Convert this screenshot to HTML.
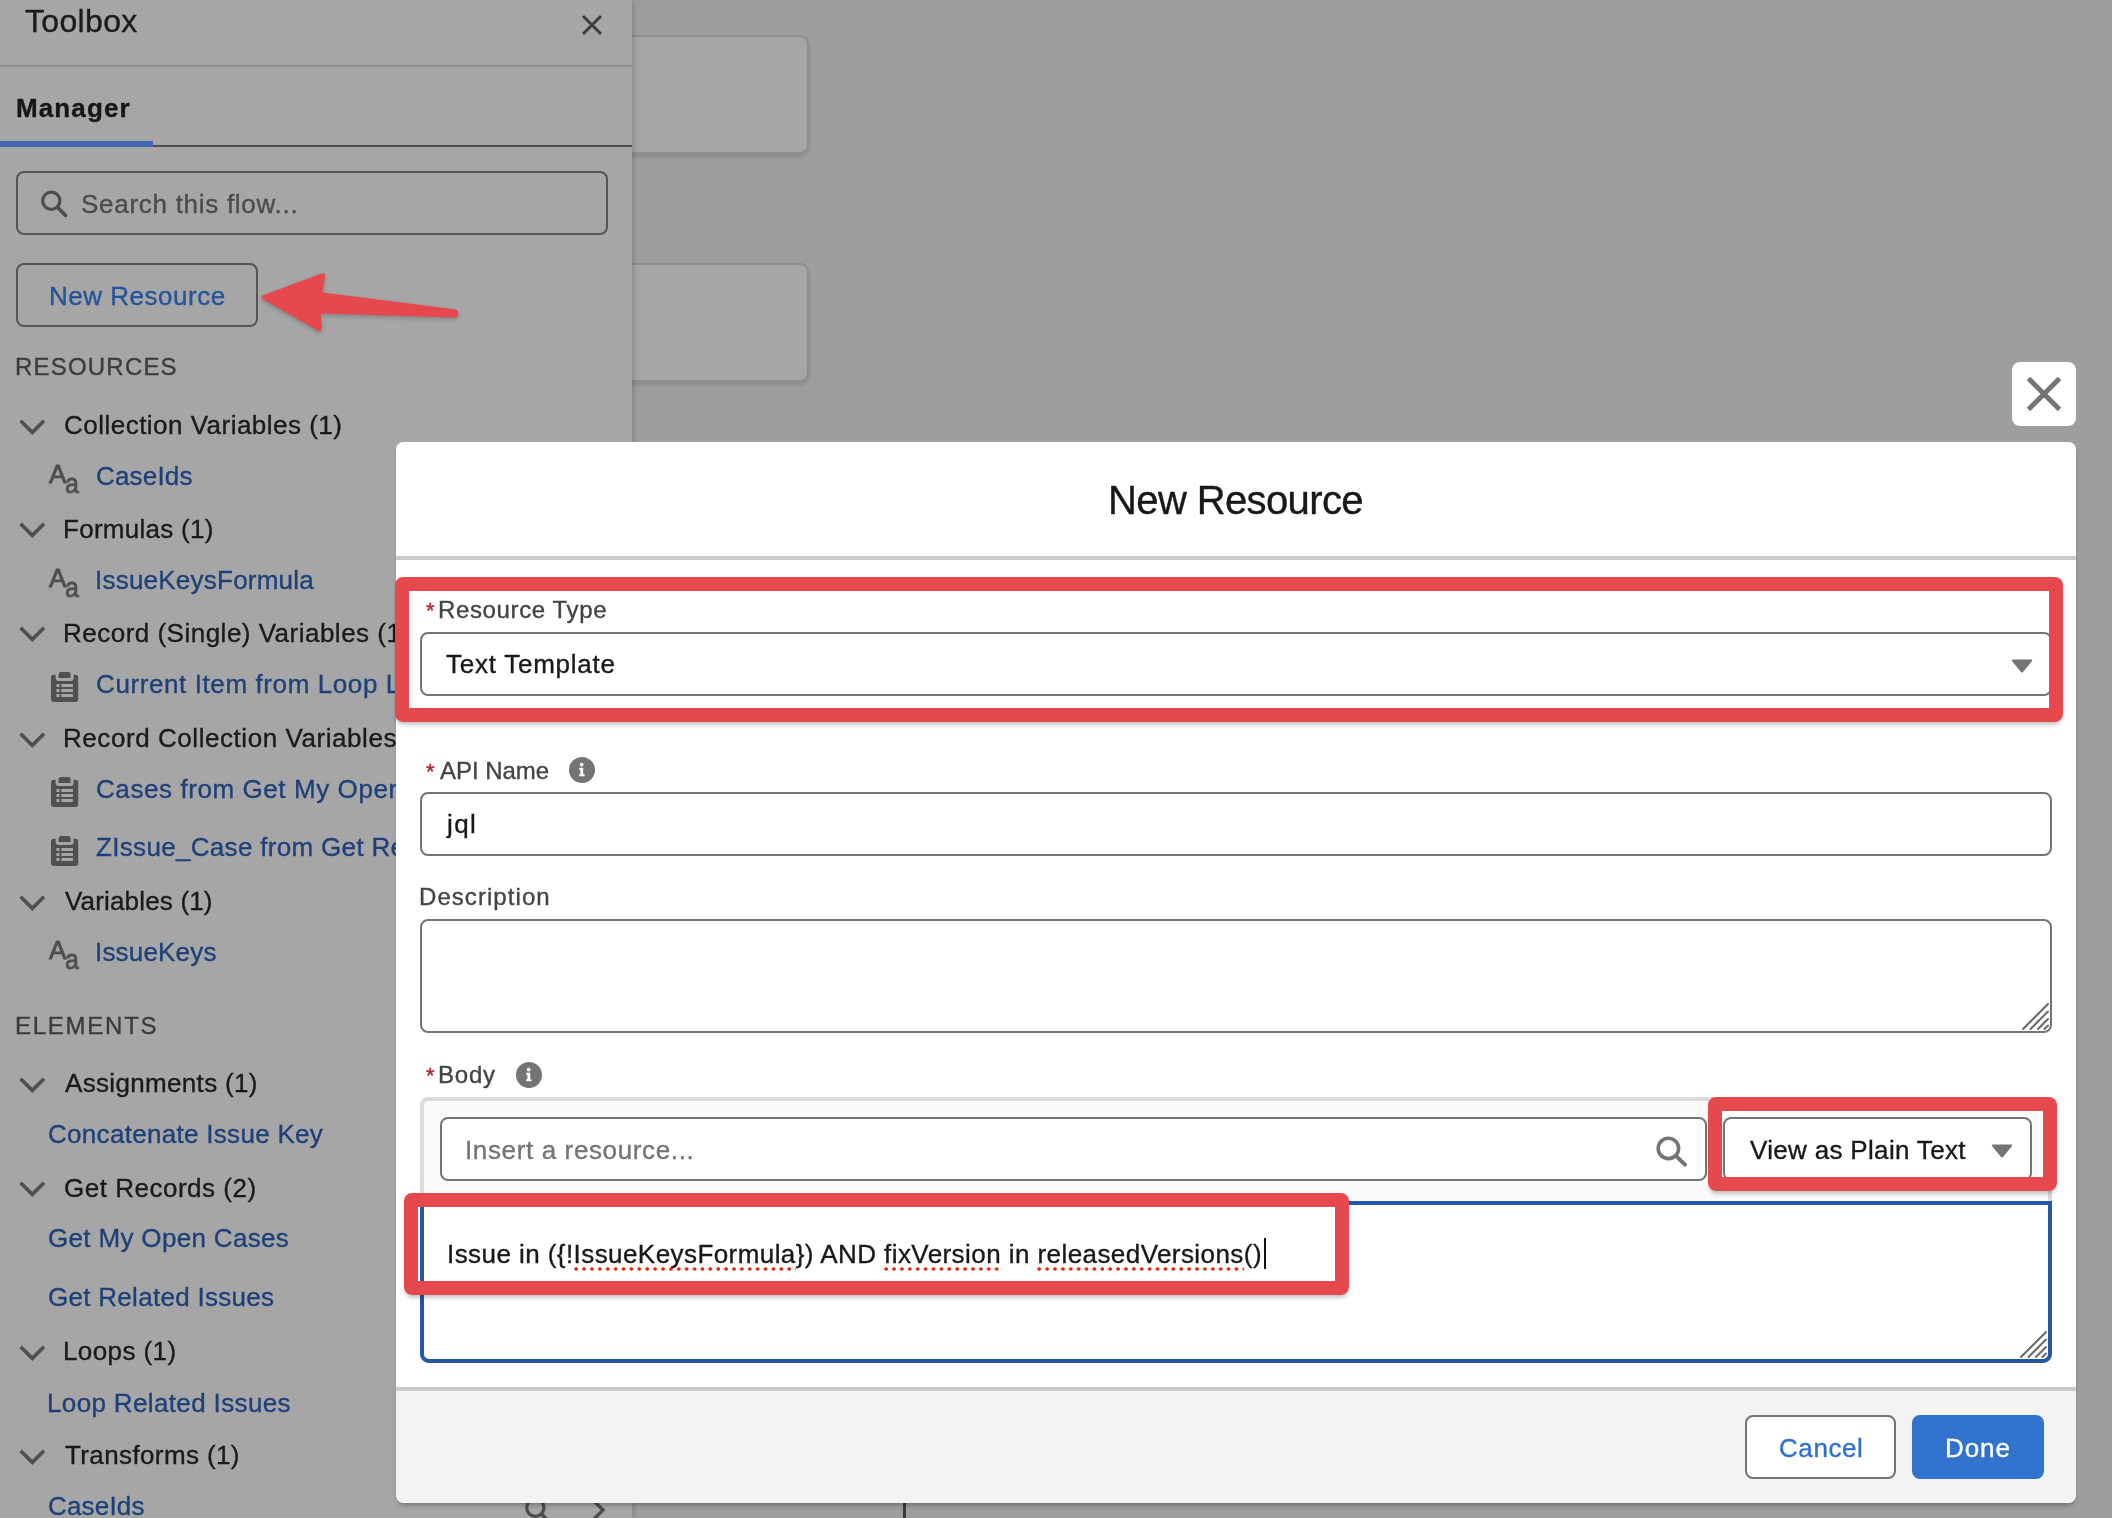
<!DOCTYPE html>
<html lang="en">
<head>
<meta charset="utf-8">
<title>New Resource</title>
<style>
*{box-sizing:border-box;margin:0;padding:0}
html,body{width:2112px;height:1518px;overflow:hidden;background:#9e9e9e}
body{position:relative;font-family:"Liberation Sans",sans-serif;color:#181818}
.abs{position:absolute}
.t{position:absolute;white-space:pre;line-height:1;font-size:26px;-webkit-text-stroke:0.35px currentColor;will-change:transform}
svg{position:absolute;overflow:visible}
/* canvas */
#canvas{left:0;top:0;width:2112px;height:1518px;background:#9e9e9e}
.card{position:absolute;left:600px;width:208.5px;height:119px;background:#a6a6a6;border:2px solid #8e8e8e;border-radius:9px;box-shadow:0 3px 4px rgba(0,0,0,.13)}
/* sidebar */
#side{left:0;top:0;width:632px;height:1518px;background:#a6a6a6;box-shadow:2px 0 6px rgba(0,0,0,.17)}
#sideclip{left:0;top:0;width:632px;height:1518px;overflow:hidden}
.sbox{position:absolute;border:2px solid #555;border-radius:8px}
/* modal */
#modal{left:396px;top:442px;width:1680px;height:1061px;background:#fff;border-radius:8px;box-shadow:0 4px 5px -2px rgba(0,0,0,.30)}
#mhead{left:396px;top:442px;width:1680px;height:118px;border-bottom:4px solid #c9c9c9;background:#fff;border-radius:8px 8px 0 0}
#mfoot{left:396px;top:1387px;width:1680px;height:116px;border-top:4px solid #c9c9c9;background:#f3f3f3;border-radius:0 0 8px 8px}
.inp{position:absolute;background:#fff;border:2px solid #747474;border-radius:8px}
.req{color:#b3222a;font-size:22px}
.red{position:absolute;border:14px solid #e5484d;border-radius:8px;box-shadow:0 4px 5px -2px rgba(0,0,0,.30)}
.sq{background:radial-gradient(circle at 2.2px 2.2px,#e12a16 1.55px,rgba(225,42,22,0) 2.2px) 0 100%/7.9px 4.4px repeat-x;padding-bottom:2.6px}
</style>
</head>
<body>
<div id="canvas" class="abs">
  <div class="card" style="top:35px"></div>
  <div class="card" style="top:263px"></div>
  <div class="abs" style="left:903px;top:1502px;width:3px;height:16px;background:#3a3a3a"></div>
</div>

<div id="side" class="abs"></div>
<div id="sideclip" class="abs">
  <!-- header -->
  <svg style="left:582px;top:15px" width="20" height="20" viewBox="0 0 20 20"><path d="M1 1 L19 19 M19 1 L1 19" stroke="#3d3d3d" stroke-width="3" fill="none"/></svg>
  <div class="abs" style="left:0;top:65px;width:632px;height:2px;background:#8e8e8e"></div>
  <div class="abs" style="left:0;top:145px;width:632px;height:2px;background:#4e4e4e"></div>
  <div class="abs" style="left:0;top:141px;width:153px;height:6px;background:#4467b1"></div>
  <!-- search -->
  <div class="sbox" style="left:16px;top:171px;width:592px;height:64px"></div>
  <svg style="left:40px;top:189px" width="28" height="28" viewBox="0 0 28 28"><circle cx="11.3" cy="11.8" r="8.6" stroke="#4d4d4d" stroke-width="3.2" fill="none"/><path d="M17.6 18.2 L25.6 26.4" stroke="#4d4d4d" stroke-width="3.6" stroke-linecap="round"/></svg>
  <!-- new resource -->
  <div class="sbox" style="left:16px;top:263px;width:242px;height:64px"></div>
<svg style="left:19px;top:418.6px" width="27" height="16" viewBox="0 0 27 16"><path d="M1.6 1.8 L13.3 13.4 L25 1.8" stroke="#4f4f4f" stroke-width="3.6" fill="none"/></svg>
<svg style="left:19px;top:522.4px" width="27" height="16" viewBox="0 0 27 16"><path d="M1.6 1.8 L13.3 13.4 L25 1.8" stroke="#4f4f4f" stroke-width="3.6" fill="none"/></svg>
<svg style="left:19px;top:626.4px" width="27" height="16" viewBox="0 0 27 16"><path d="M1.6 1.8 L13.3 13.4 L25 1.8" stroke="#4f4f4f" stroke-width="3.6" fill="none"/></svg>
<svg style="left:19px;top:731.8px" width="27" height="16" viewBox="0 0 27 16"><path d="M1.6 1.8 L13.3 13.4 L25 1.8" stroke="#4f4f4f" stroke-width="3.6" fill="none"/></svg>
<svg style="left:19px;top:894.7px" width="27" height="16" viewBox="0 0 27 16"><path d="M1.6 1.8 L13.3 13.4 L25 1.8" stroke="#4f4f4f" stroke-width="3.6" fill="none"/></svg>
<svg style="left:19px;top:1076.7px" width="27" height="16" viewBox="0 0 27 16"><path d="M1.6 1.8 L13.3 13.4 L25 1.8" stroke="#4f4f4f" stroke-width="3.6" fill="none"/></svg>
<svg style="left:19px;top:1181.4px" width="27" height="16" viewBox="0 0 27 16"><path d="M1.6 1.8 L13.3 13.4 L25 1.8" stroke="#4f4f4f" stroke-width="3.6" fill="none"/></svg>
<svg style="left:19px;top:1345.0px" width="27" height="16" viewBox="0 0 27 16"><path d="M1.6 1.8 L13.3 13.4 L25 1.8" stroke="#4f4f4f" stroke-width="3.6" fill="none"/></svg>
<svg style="left:19px;top:1448.6px" width="27" height="16" viewBox="0 0 27 16"><path d="M1.6 1.8 L13.3 13.4 L25 1.8" stroke="#4f4f4f" stroke-width="3.6" fill="none"/></svg>
<div class="t" style="left:48.6px;top:460.7px;font-size:26px;color:#4f4f4f;-webkit-text-stroke:0.9px #4f4f4f">A</div><div class="t" style="left:65.2px;top:470.5px;font-size:27px;color:#4f4f4f;-webkit-text-stroke:0.8px #4f4f4f;transform:scaleX(.92);transform-origin:0 0">a</div>
<div class="t" style="left:48.6px;top:564.9px;font-size:26px;color:#4f4f4f;-webkit-text-stroke:0.9px #4f4f4f">A</div><div class="t" style="left:65.2px;top:574.7px;font-size:27px;color:#4f4f4f;-webkit-text-stroke:0.8px #4f4f4f;transform:scaleX(.92);transform-origin:0 0">a</div>
<div class="t" style="left:48.6px;top:936.8px;font-size:26px;color:#4f4f4f;-webkit-text-stroke:0.9px #4f4f4f">A</div><div class="t" style="left:65.2px;top:946.6px;font-size:27px;color:#4f4f4f;-webkit-text-stroke:0.8px #4f4f4f;transform:scaleX(.92);transform-origin:0 0">a</div>
<svg style="left:50.8px;top:672.0px" width="28" height="30" viewBox="0 0 28 30"><path fill="#4f4f4f" fill-rule="evenodd" d="M3 2.8 H4.6 V6 Q4.6 9 7.6 9 H19.6 Q22.6 9 22.6 6 V2.8 H24.2 Q27.2 2.8 27.2 5.8 V27 Q27.2 30 24.2 30 H3 Q0 30 0 27 V5.8 Q0 2.8 3 2.8 Z M5.4 11.9 V15.1 H8.5 V11.9 Z M10.3 11.9 V15.1 H21.9 V11.9 Z M5.4 16.9 V20.1 H8.5 V16.9 Z M10.3 16.9 V20.1 H21.9 V16.9 Z M5.4 21.9 V25.1 H8.5 V21.9 Z M10.3 21.9 V25.1 H21.9 V21.9 Z"/><path fill="#4f4f4f" d="M7.6 6 V2.4 Q7.6 0 10 0 H17.2 Q19.6 0 19.6 2.4 V6 Z"/></svg>
<svg style="left:50.8px;top:777.4px" width="28" height="30" viewBox="0 0 28 30"><path fill="#4f4f4f" fill-rule="evenodd" d="M3 2.8 H4.6 V6 Q4.6 9 7.6 9 H19.6 Q22.6 9 22.6 6 V2.8 H24.2 Q27.2 2.8 27.2 5.8 V27 Q27.2 30 24.2 30 H3 Q0 30 0 27 V5.8 Q0 2.8 3 2.8 Z M5.4 11.9 V15.1 H8.5 V11.9 Z M10.3 11.9 V15.1 H21.9 V11.9 Z M5.4 16.9 V20.1 H8.5 V16.9 Z M10.3 16.9 V20.1 H21.9 V16.9 Z M5.4 21.9 V25.1 H8.5 V21.9 Z M10.3 21.9 V25.1 H21.9 V21.9 Z"/><path fill="#4f4f4f" d="M7.6 6 V2.4 Q7.6 0 10 0 H17.2 Q19.6 0 19.6 2.4 V6 Z"/></svg>
<svg style="left:50.8px;top:835.8px" width="28" height="30" viewBox="0 0 28 30"><path fill="#4f4f4f" fill-rule="evenodd" d="M3 2.8 H4.6 V6 Q4.6 9 7.6 9 H19.6 Q22.6 9 22.6 6 V2.8 H24.2 Q27.2 2.8 27.2 5.8 V27 Q27.2 30 24.2 30 H3 Q0 30 0 27 V5.8 Q0 2.8 3 2.8 Z M5.4 11.9 V15.1 H8.5 V11.9 Z M10.3 11.9 V15.1 H21.9 V11.9 Z M5.4 16.9 V20.1 H8.5 V16.9 Z M10.3 16.9 V20.1 H21.9 V16.9 Z M5.4 21.9 V25.1 H8.5 V21.9 Z M10.3 21.9 V25.1 H21.9 V21.9 Z"/><path fill="#4f4f4f" d="M7.6 6 V2.4 Q7.6 0 10 0 H17.2 Q19.6 0 19.6 2.4 V6 Z"/></svg>

<div id="tb" class="t" style="left:25px;top:5px;font-size:32px;color:#1a1a1a;letter-spacing:0.33px">Toolbox</div>
<div id="mgr" class="t" style="left:16px;top:95px;font-size:26px;color:#161616;letter-spacing:1.12px;font-weight:700">Manager</div>
<div id="srch" class="t" style="left:81px;top:191px;font-size:26px;color:#4b4b4b;letter-spacing:0.72px">Search this flow...</div>
<div id="nrb" class="t" style="left:49px;top:283px;font-size:26px;color:#24549a;letter-spacing:0.52px">New Resource</div>
<div id="res" class="t" style="left:15px;top:355px;font-size:24px;color:#3b3b3b;letter-spacing:1.20px">RESOURCES</div>
<div id="g1" class="t" style="left:64px;top:412px;font-size:26px;color:#1a1a1a;letter-spacing:0.48px">Collection Variables (1)</div>
<div id="l1" class="t" style="left:96px;top:463px;font-size:26px;color:#1e4079;letter-spacing:0.17px">CaseIds</div>
<div id="g2" class="t" style="left:63px;top:516px;font-size:26px;color:#1a1a1a;letter-spacing:0.27px">Formulas (1)</div>
<div id="l2" class="t" style="left:95px;top:567px;font-size:26px;color:#1e4079;letter-spacing:0.23px">IssueKeysFormula</div>
<div id="g3" class="t" style="left:63px;top:620px;font-size:26px;color:#1a1a1a;letter-spacing:0.49px">Record (Single) Variables (1)</div>
<div id="l3" class="t" style="left:96px;top:671px;font-size:26px;color:#1e4079;letter-spacing:0.60px">Current Item from Loop Loop Related Issues</div>
<div id="g4" class="t" style="left:63px;top:725px;font-size:26px;color:#1a1a1a;letter-spacing:0.56px">Record Collection Variables (2)</div>
<div id="l4" class="t" style="left:96px;top:776px;font-size:26px;color:#1e4079;letter-spacing:0.58px">Cases from Get My Open Cases</div>
<div id="l5" class="t" style="left:96px;top:834px;font-size:26px;color:#1e4079;letter-spacing:0.32px">ZIssue_Case from Get Related Issues</div>
<div id="g5" class="t" style="left:65px;top:888px;font-size:26px;color:#1a1a1a;letter-spacing:0.17px">Variables (1)</div>
<div id="l6" class="t" style="left:95px;top:939px;font-size:26px;color:#1e4079;letter-spacing:0.18px">IssueKeys</div>
<div id="ele" class="t" style="left:15px;top:1014px;font-size:24px;color:#3b3b3b;letter-spacing:1.74px">ELEMENTS</div>
<div id="g6" class="t" style="left:65px;top:1070px;font-size:26px;color:#1a1a1a;letter-spacing:0.33px">Assignments (1)</div>
<div id="l7" class="t" style="left:48px;top:1121px;font-size:26px;color:#1e4079;letter-spacing:0.30px">Concatenate Issue Key</div>
<div id="g7" class="t" style="left:64px;top:1175px;font-size:26px;color:#1a1a1a;letter-spacing:0.51px">Get Records (2)</div>
<div id="l8" class="t" style="left:48px;top:1225px;font-size:26px;color:#1e4079;letter-spacing:0.33px">Get My Open Cases</div>
<div id="l9" class="t" style="left:48px;top:1284px;font-size:26px;color:#1e4079;letter-spacing:0.29px">Get Related Issues</div>
<div id="g8" class="t" style="left:63px;top:1338px;font-size:26px;color:#1a1a1a;letter-spacing:0.40px">Loops (1)</div>
<div id="l10" class="t" style="left:47px;top:1390px;font-size:26px;color:#1e4079;letter-spacing:0.36px">Loop Related Issues</div>
<div id="g9" class="t" style="left:65px;top:1442px;font-size:26px;color:#1a1a1a;letter-spacing:0.38px">Transforms (1)</div>
<div id="l11" class="t" style="left:48px;top:1493px;font-size:26px;color:#1e4079;letter-spacing:0.17px">CaseIds</div>

  <!-- bottom partial icons -->
  <svg style="left:524px;top:1496px" width="28" height="28" viewBox="0 0 28 28"><circle cx="11.3" cy="11.8" r="8.6" stroke="#4d4d4d" stroke-width="3.2" fill="none"/><path d="M17.6 18.2 L25.6 26.4" stroke="#4d4d4d" stroke-width="3.6" stroke-linecap="round"/></svg>
  <svg style="left:590px;top:1498px" width="16" height="26" viewBox="0 0 16 26"><path d="M3 2 L13 12 L3 22" stroke="#4d4d4d" stroke-width="3.4" fill="none"/></svg>
</div>

<!-- red arrow -->
<svg style="left:0;top:0;filter:drop-shadow(0 2px 2px rgba(0,0,0,.22))" width="640" height="400" viewBox="0 0 640 400">
  <path d="M262.5 295.5 L321.5 273.6 Q325.6 272.4 325 276.6 L322.4 292.6 L454.4 309.3 Q458.6 310.2 458.4 313.8 Q458 317.8 453.6 317.6 L320.6 313.4 L321.8 328.4 Q322 332.6 318 330.8 L262.8 299.2 Q260.4 297.2 262.5 295.5 Z" fill="#e5484d"/>
</svg>

<div id="closebtn" class="abs" style="left:2012px;top:362px;width:64px;height:64px;background:#fff;border-radius:8px">
  <svg style="left:0;top:0" width="64" height="64" viewBox="0 0 64 64"><path d="M16.5 16.5 L47.5 47.5 M47.5 16.5 L16.5 47.5" stroke="#747474" stroke-width="5" fill="none"/></svg>
</div>

<div id="modal" class="abs"></div>
<div id="mhead" class="abs"></div>
<div id="mfoot" class="abs"></div>

<!-- form -->
<div class="t req" style="left:425.8px;top:600.4px">*</div>
<div class="inp" style="left:420px;top:632px;width:1632px;height:64px"></div>
<svg style="left:2011px;top:659px" width="22" height="14" viewBox="0 0 22 14"><path d="M1.5 0.5 L20.5 0.5 Q21.8 0.7 21 1.9 L12 13 Q11 14 10 13 L1 1.9 Q0.2 0.7 1.5 0.5 Z" fill="#747474"/></svg>

<div class="t req" style="left:425.8px;top:760.5px">*</div>
<svg style="left:569px;top:757px" width="26" height="26" viewBox="0 0 26 26"><circle cx="13" cy="13" r="13" fill="#747474"/><circle cx="12.7" cy="7.6" r="1.9" fill="#fff"/><path d="M10.2 10.8 H14.2 V17.2 H15.6 V19.2 H10.2 V17.2 H11.4 V12.8 H10.2 Z" fill="#fff"/></svg>
<div class="inp" style="left:420px;top:792px;width:1632px;height:64px"></div>

<div class="inp" style="left:420px;top:919px;width:1632px;height:114px"></div>
<svg style="left:2021px;top:1003px" width="28" height="28" viewBox="0 0 28 28"><path d="M2 26 L27 1 M9.5 26 L27 8.5 M17 26 L27 16 M23.5 26 L27 22.5" stroke="#6a6a6a" stroke-width="2.1" stroke-linecap="round" fill="none"/></svg>

<div class="t req" style="left:425.8px;top:1065.2px">*</div>
<svg style="left:516px;top:1062px" width="26" height="26" viewBox="0 0 26 26"><circle cx="13" cy="13" r="13" fill="#747474"/><circle cx="12.7" cy="7.6" r="1.9" fill="#fff"/><path d="M10.2 10.8 H14.2 V17.2 H15.6 V19.2 H10.2 V17.2 H11.4 V12.8 H10.2 Z" fill="#fff"/></svg>

<!-- rich text container -->
<div class="abs" style="left:420px;top:1097px;width:1632px;height:266px;background:#fafaf9;border:4px solid #dddbda;border-radius:8px"></div>
<div class="inp" style="left:440px;top:1117px;width:1267px;height:64px"></div>
<svg style="left:1655px;top:1135px" width="32" height="32" viewBox="0 0 32 32"><circle cx="13.4" cy="13.4" r="10.2" stroke="#747474" stroke-width="3.6" fill="none"/><path d="M20.8 20.8 L30 29.6" stroke="#747474" stroke-width="4" stroke-linecap="round"/></svg>
<div class="inp" style="left:1723px;top:1117px;width:309px;height:64px"></div>
<svg style="left:1991px;top:1144px" width="22" height="14" viewBox="0 0 22 14"><path d="M1.5 0.5 L20.5 0.5 Q21.8 0.7 21 1.9 L12 13 Q11 14 10 13 L1 1.9 Q0.2 0.7 1.5 0.5 Z" fill="#747474"/></svg>
<!-- body textarea -->
<div class="abs" style="left:420px;top:1201px;width:1632px;height:162px;background:#fff;border:4px solid #2557a7;border-radius:0 0 9px 9px"></div>
<svg style="left:2019px;top:1331px" width="28" height="28" viewBox="0 0 28 28"><path d="M2 26 L27 1 M9.5 26 L27 8.5 M17 26 L27 16 M23.5 26 L27 22.5" stroke="#6a6a6a" stroke-width="2.1" stroke-linecap="round" fill="none"/></svg>
<div id="body" class="t" style="left:447px;top:1241px;font-size:26px;color:#181818;letter-spacing:0.43px">Issue in ({!<span class="sq">IssueKeysFormula</span>}) AND <span class="sq">fixVersion</span> in <span class="sq">releasedVersions</span>()</div>

<div class="abs" style="left:1264px;top:1237.5px;width:2px;height:31px;background:#111"></div>

<!-- footer buttons -->
<div class="inp" style="left:1745px;top:1415px;width:151px;height:64px"></div>
<div class="abs" style="left:1912px;top:1415px;width:132px;height:64px;background:#3273cd;border-radius:8px"></div>

<div id="mt" class="t" style="left:1108px;top:480px;font-size:40px;color:#181818;letter-spacing:-0.62px">New Resource</div>
<div id="lb1" class="t" style="left:438px;top:598px;font-size:24px;color:#444;letter-spacing:0.63px">Resource Type</div>
<div id="v1" class="t" style="left:446px;top:651px;font-size:26px;color:#181818;letter-spacing:0.75px">Text Template</div>
<div id="lb2" class="t" style="left:440px;top:759px;font-size:24px;color:#444;letter-spacing:-0.03px">API Name</div>
<div id="v2" class="t" style="left:447px;top:811px;font-size:26px;color:#181818;letter-spacing:1.35px">jql</div>
<div id="lb3" class="t" style="left:419px;top:885px;font-size:24px;color:#444;letter-spacing:1.06px">Description</div>
<div id="lb4" class="t" style="left:438px;top:1063px;font-size:24px;color:#444;letter-spacing:0.80px">Body</div>
<div id="ph" class="t" style="left:465px;top:1137px;font-size:26px;color:#747474;letter-spacing:0.63px">Insert a resource...</div>
<div id="v3" class="t" style="left:1750px;top:1137px;font-size:26px;color:#181818;letter-spacing:0.32px">View as Plain Text</div>
<div id="can" class="t" style="left:1779px;top:1435px;font-size:26px;color:#2e70d0;letter-spacing:0.59px">Cancel</div>
<div id="done" class="t" style="left:1945px;top:1435px;font-size:26px;color:#fff;letter-spacing:0.90px">Done</div>


<!-- red annotation boxes -->
<div class="red" style="left:394.5px;top:577px;width:1668px;height:145px"></div>
<div class="red" style="left:1708px;top:1096.5px;width:348.5px;height:94px"></div>
<div class="red" style="left:403.5px;top:1193px;width:945px;height:102px"></div>
</body>
</html>
